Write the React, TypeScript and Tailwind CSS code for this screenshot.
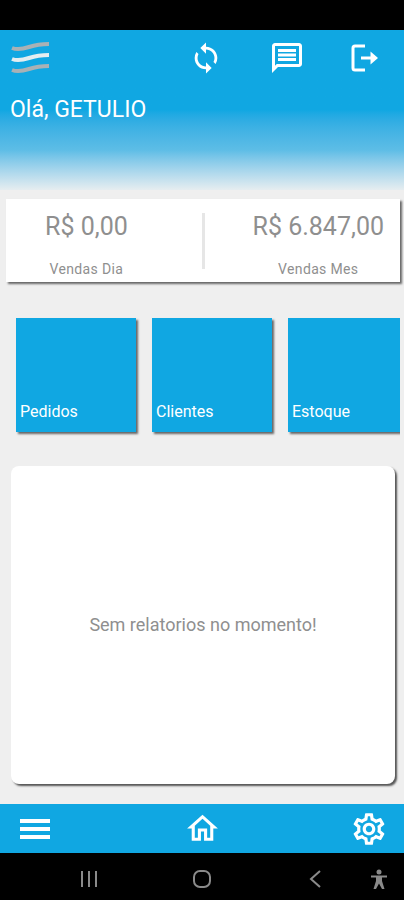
import React from "react";
import {
  MdSync,
  MdOutlineMessage,
  MdOutlineHome,
  MdOutlineSettings,
} from "react-icons/md";

type StatProps = { value: string; label: string; className?: string };

const Stat = ({ value, label, className = "" }: StatProps) => {
  return (
    <div className={`flex flex-col items-center text-[#8f8f8f] ${className}`}>
      <p className="text-[25px] leading-7">{value}</p>
      <p className="mt-4 text-sm leading-6 tracking-wide">{label}</p>
    </div>
  );
};

const Tile = ({ title }: { title: string }) => {
  return (
    <button
      type="button"
      className="flex h-[114px] w-[120px] shrink-0 items-end bg-[#10a7e2] px-1 pb-2 text-left text-base text-white shadow-[2px_2px_2px_#666]"
    >
      {title}
    </button>
  );
};

const Logo = () => {
  return (
    <svg width="40" height="34" viewBox="0 0 40 34" fill="none" strokeWidth="4">
      <path d="M1 7C6 9 12 8 18 6C24 4 29 3 38 3" stroke="#a9b1b5" />
      <path d="M1 18C6 20 12 19 18 17C24 15 29 14 38 14" stroke="#e3edf0" />
      <path d="M1 29C6 31 12 30 18 28C24 26 29 25 38 25" stroke="#a9b1b5" />
    </svg>
  );
};

const ExitIcon = () => {
  return (
    <svg width="28" height="28" viewBox="0 0 28 28" fill="none" stroke="white" strokeWidth="3">
      <path d="M14 2H4Q2 2 2 4V24Q2 26 4 26H14" />
      <path d="M10 14H22" />
      <path d="M19.500 7.500L27 14L19.500 20.500Z" fill="white" stroke="none" />
    </svg>
  );
};

const App = () => {
  const tiles = ["Pedidos", "Clientes", "Estoque"];

  return (
    <div className="flex min-h-screen flex-col bg-[#efefef] font-['Roboto',sans-serif]">
      {/* Status bar */}
      <div className="h-[30px] bg-black" />

      {/* Header */}
      <header className="h-[160px] bg-linear-to-b from-[#10a7e2] from-50% via-[#5dbde6] via-75% to-[#e6edf0]">
        <div className="flex h-14 items-center justify-between pr-[25px] pl-[11px]">
          <Logo />
          <div className="flex items-center gap-[46px] text-white">
            <button type="button" aria-label="Sincronizar">
              <MdSync size={34} />
            </button>
            <button type="button" aria-label="Mensagens">
              <MdOutlineMessage size={36} />
            </button>
            <button type="button" aria-label="Sair">
              <ExitIcon />
            </button>
          </div>
        </div>
        <h1 className="px-[10px] pt-2 text-[23px] leading-8 text-white">Olá, GETULIO</h1>
      </header>

      {/* Sales */}
      <section className="mt-[9px] mr-1 ml-[6px] grid grid-cols-[1fr_3px_1fr] bg-white pt-[14px] pb-px shadow-[2px_2px_2px_#666]">
        <Stat value="R$ 0,00" label="Vendas Dia" className="ml-[39px] justify-self-start" />
        <div className="h-14 bg-[#e6e6e6]" />
        <Stat value="R$ 6.847,00" label="Vendas Mes" className="mr-4 justify-self-end" />
      </section>

      {/* Shortcuts */}
      <nav className="mt-6 mr-1 flex gap-4 overflow-x-auto px-4 pt-3 pb-4 [scrollbar-width:none]">
        {tiles.map((title) => (
          <Tile key={title} title={title} />
        ))}
      </nav>

      {/* Reports */}
      <main className="mt-[18px] mr-[9px] mb-5 ml-[11px] flex flex-1 items-center justify-center rounded-lg bg-white shadow-[2px_2px_2px_#555]">
        <p className="text-lg text-[#8f8f8f]">Sem relatorios no momento!</p>
      </main>

      {/* Bottom menu */}
      <footer className="flex h-[49px] items-center justify-between bg-[#10a7e2] px-4 text-white">
        <button type="button" aria-label="Menu">
          <svg width="38" height="38" viewBox="0 0 38 38" fill="currentColor">
            <path d="M4 9H34V13H4ZM4 17H34V21H4ZM4 25H34V29H4Z" />
          </svg>
        </button>
        <button type="button" aria-label="Inicio">
          <MdOutlineHome size={37} />
        </button>
        <button type="button" aria-label="Ajustes">
          <MdOutlineSettings size={38} />
        </button>
      </footer>

      {/* System navigation */}
      <div className="grid h-[47px] grid-cols-[1fr_auto_1fr] items-center bg-black pt-1 text-[#8a8a8a]">
        <button type="button" aria-label="Recentes" className="ml-20 justify-self-start">
          <svg width="18" height="18" viewBox="0 0 18 18" stroke="currentColor" strokeWidth="2">
            <path d="M2 1V17M9 1V17M16 1V17" />
          </svg>
        </button>
        <button type="button" aria-label="Tela inicial">
          <svg width="20" height="20" viewBox="0 0 20 20" fill="none" stroke="currentColor" strokeWidth="2">
            <rect x="2" y="2" width="16" height="16" rx="6" />
          </svg>
        </button>
        <div className="mr-4 flex items-center gap-12 justify-self-end">
          <button type="button" aria-label="Voltar">
            <svg width="14" height="18" viewBox="0 0 14 18" fill="none" stroke="currentColor" strokeWidth="2">
              <path d="M12 1L3 9L12 17" />
            </svg>
          </button>
          <button type="button" aria-label="Acessibilidade">
            <svg width="18" height="20" viewBox="0 0 18 20" fill="currentColor">
              <circle cx="9" cy="3" r="2.500" />
              <path d="M1 6.500H17V8.500H12V12L14.500 20H12L9 14.500L6 20H3.500L6 12V8.500H1Z" />
            </svg>
          </button>
        </div>
      </div>
    </div>
  );
};

export default App;
